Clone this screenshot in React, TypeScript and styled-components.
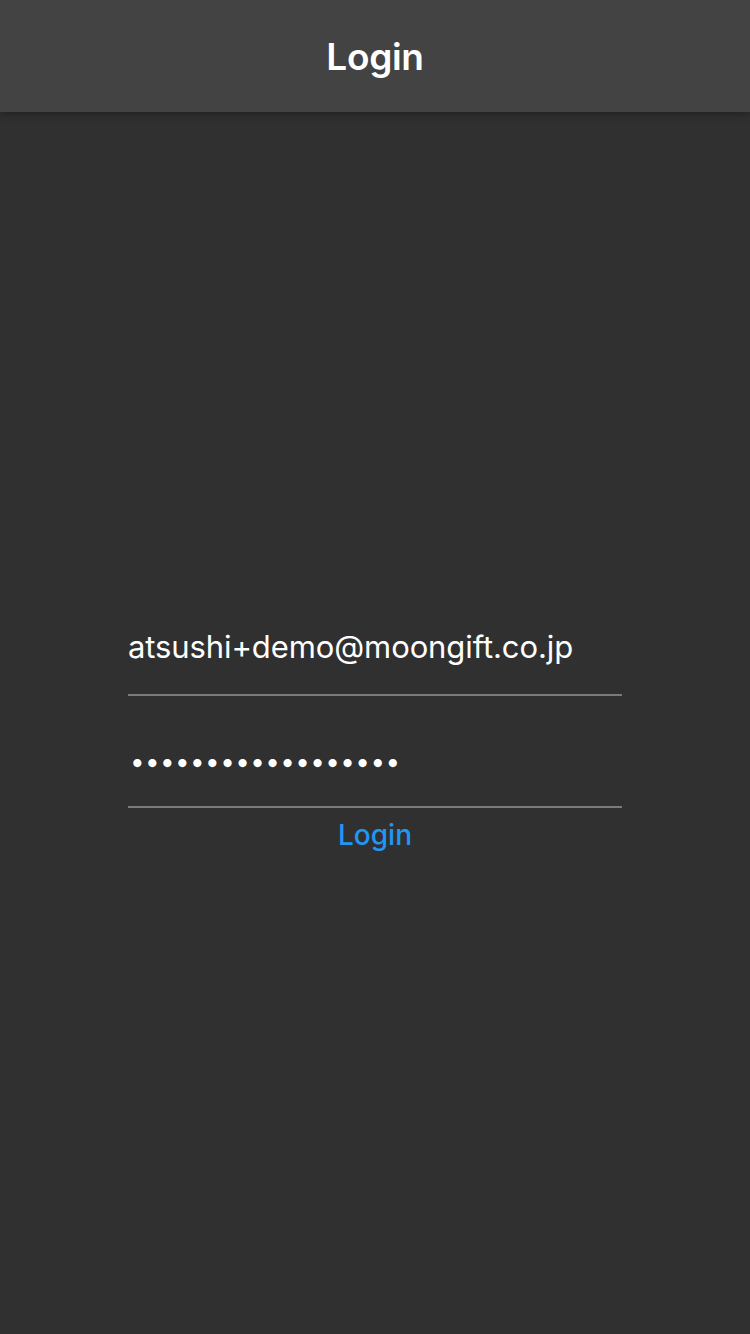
import React from "react";
import styled, { createGlobalStyle } from "styled-components";

const Global = createGlobalStyle`
  html, body { margin: 0; padding: 0; background: #303030; }
  body { font-family: Inter, "Noto Sans", sans-serif; }
  * { box-sizing: border-box; }
`;

const Page = styled.div`
  width: 750px;
  height: 1334px;
  display: flex;
  flex-direction: column;
  background: #303030;
`;

const Header = styled.header`
  height: 112px;
  flex: none;
  background: #434343;
  display: flex;
  align-items: center;
  justify-content: center;
  box-shadow: 0 2px 8px rgba(0, 0, 0, 0.35);
  position: relative;
  z-index: 1;
`;

const Title = styled.h1`
  margin: 0;
  color: #ffffff;
  font-size: 37px;
  font-weight: 600;
  letter-spacing: -0.3px;
`;

const Body = styled.main`
  flex: 1;
  display: flex;
  flex-direction: column;
  align-items: center;
  padding-top: 472px;
`;

const Form = styled.form`
  width: 494px;
  display: flex;
  flex-direction: column;
`;

const Field = styled.input<{ $dots?: boolean }>`
  width: 100%;
  height: 112px;
  padding: ${(p) => (p.$dots ? "20px 0 0 2px" : "14px 0 0 0")};
  background: transparent;
  border: none;
  border-bottom: 2px solid #7a7a7a;
  color: #ffffff;
  font-family: Inter, "Noto Sans", sans-serif;
  font-size: ${(p) => (p.$dots ? "26px" : "31px")};
  letter-spacing: ${(p) => (p.$dots ? "0.4px" : "-0.1px")};
  outline: none;
`;

const Button = styled.button`
  align-self: center;
  margin-top: 10px;
  background: none;
  border: none;
  padding: 0;
  color: #2196f3;
  font-family: Inter, "Noto Sans", sans-serif;
  font-size: 28px;
  font-weight: 500;
  cursor: pointer;
`;

export default function App() {
  return (
    <Page>
      <Global />
      <Header>
        <Title>Login</Title>
      </Header>
      <Body>
        <Form onSubmit={(e) => e.preventDefault()}>
          <Field type="email" readOnly value="atsushi+demo@moongift.co.jp" />
          <Field $dots type="password" readOnly value="abcdefghijklmnopqr" />
          <Button type="submit">Login</Button>
        </Form>
      </Body>
    </Page>
  );
}
